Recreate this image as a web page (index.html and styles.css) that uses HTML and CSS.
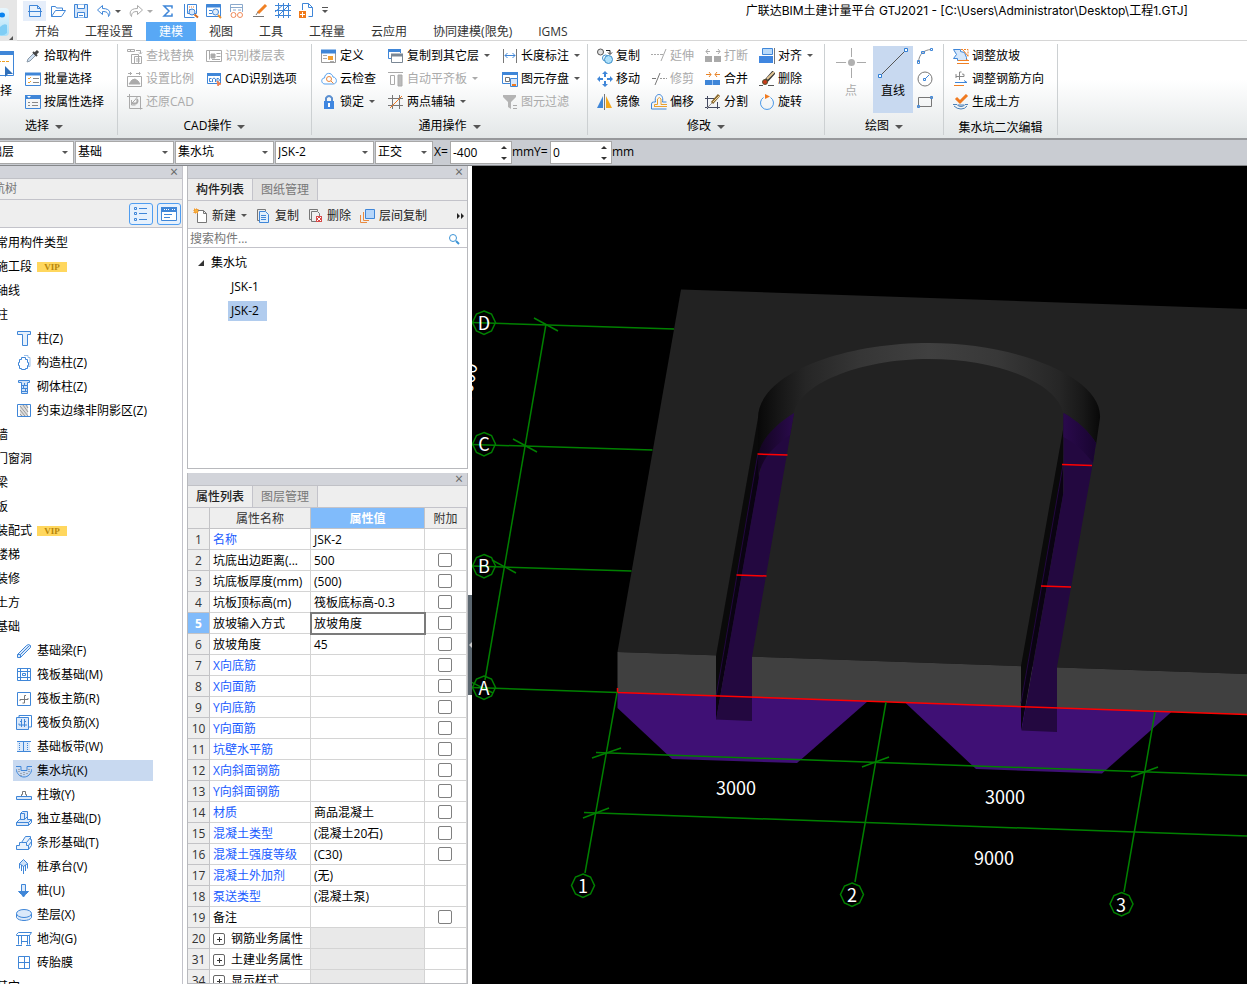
FILE: index.html
```html
<!DOCTYPE html>
<html lang="zh-CN">

<head>
  <meta charset="UTF-8">
  <meta name="viewport" content="width=device-width, initial-scale=1.0">
  <title>广联达BIM土建计量平台 GTJ2021</title>
  <link rel="stylesheet" href="styles.css">
</head>

<body>
  <header class="app-header">
    <div class="logo">
      <svg width="17" height="43" viewBox="0 0 17 43">
        <defs>
          <linearGradient id="logoBg" x1="0" y1="0" x2="0" y2="1">
            <stop offset="0" stop-color="#e8f6fd" />
            <stop offset="1" stop-color="#a9dff8" />
          </linearGradient>
        </defs>
        <rect x="-10" y="8" width="19" height="28" rx="4" fill="url(#logoBg)" />
        <ellipse cx="2" cy="15" rx="3" ry="2.5" fill="#0a84f0" />
        <path d="M0 27q4-4 7-2v8q-3 3-7 2z" fill="#7fcdf5" />
        <path d="M13 36v4h-4z" fill="#555" />
      </svg>
    </div>
    <div class="header-main">
      <div class="titlebar">
        <div class="quick">
          <button class="quick-btn current" aria-label="新建"><svg class="icon" viewBox="0 0 16 16"><path d="M2.500 2.500h8l3 3v8h-11zM10.500 2.500v3h3M1 8.500h14" fill="#e8f2fd" /></svg></button>
          <button class="quick-btn" aria-label="打开"><svg class="icon" viewBox="0 0 16 16"><path d="M1.500 13.500v-10h4l1 1.500h6v2.500M1.500 13.500l4-6h10l-4 6z" /></svg></button>
          <button class="quick-btn" aria-label="保存"><svg class="icon" viewBox="0 0 16 16"><path d="M1.500 1.500h13v13h-13z" fill="#d5e6fa" /><path d="M4.500 1.500v4h7v-4M4.500 14.500v-5h7v5M6 12.500h4" fill="#fff" /></svg></button>
          <button class="quick-btn split" aria-label="撤销"><svg class="icon" viewBox="0 0 16 16"><path d="M6.500 2.500l-5 4.500 5 4.500v-3c4 0 6 1 6 5 2-2 3-8-6-8z" /></svg><span class="caret"></span></button>
          <button class="quick-btn split" aria-label="恢复"><svg class="icon off" viewBox="0 0 16 16"><path d="M9.500 2.500l5 4.500-5 4.500v-3c-4 0-6 1-6 5-2-2-3-8 6-8z" /></svg><span class="caret off"></span></button>
          <button class="quick-btn" aria-label="汇总计算"><svg class="icon" viewBox="0 0 16 16"><path d="M12 5.500v-2.500H4l5 5-5 5h8v-2.500" stroke-width="1.500" /></svg></button>
          <button class="quick-btn" aria-label="查看工程量"><svg class="icon" viewBox="0 0 16 16"><path d="M1.500 1v13.500h10M4.500 1.500h9v9h-9z" /><path d="M6 4h6M6 6.500h4" stroke="#f08038" stroke-dasharray="1 1" /><circle cx="9" cy="9" r="3" fill="#d8e8fa" /><path d="M11.500 11.500l3.500 3" stroke="#d2691e" stroke-width="2" /></svg></button>
          <button class="quick-btn" aria-label="查看报表"><svg class="icon" viewBox="0 0 16 16"><path d="M.500 1.500h14v12h-14z" /><path d="M0 3h15" stroke-width="3" /><path d="M3 7.500h3M3 10.500h3" /><circle cx="9.500" cy="9" r="3" fill="#e2eefb" /><path d="M12 12l3 3" stroke="#e89030" stroke-width="2" /></svg></button>
          <button class="quick-btn" aria-label="合法性检查"><svg class="icon" viewBox="0 0 16 16"><path d="M1.500 9v-7.500h12v7.500M1.500 4.500h12M4 7h3M9 7h3" stroke="#8aa9cc" /><circle cx="4.500" cy="12" r="2.500" stroke="#f08a5a" /><circle cx="11" cy="12" r="2.500" stroke="#f08a5a" /></svg></button>
          <button class="quick-btn" aria-label="标注"><svg class="icon" viewBox="0 0 16 16"><path d="M14 2l-8 8" stroke="#f08024" stroke-width="3" /><path d="M6 9l-2 3M1 13.500h11" stroke="#777" /></svg></button>
          <button class="quick-btn" aria-label="轴网"><svg class="icon" viewBox="0 0 16 16"><path d="M3.500 0v15M8.500 0v15M13.500 0v15M0 2.500h16M0 7.500h16M0 12.500h16M3.500 12.500l10-10M0 9l9-8" /></svg></button>
          <button class="quick-btn" aria-label="导出"><svg class="icon" viewBox="0 0 16 16"><path d="M4.500 7v-6.500h6l4 4v9h-4M10.500 .500v4h4" /><path d="M1 8h7v7H1z" fill="#f07a1a" stroke="none" /><path d="M2 11.500h5M4.500 9v5" stroke="#fff" /></svg></button>
          <button class="quick-btn more" aria-label="更多"><span class="caret"></span></button>
        </div>
        <h1 class="window-title">广联达BIM土建计量平台 GTJ2021 - [C:\Users\Administrator\Desktop\工程1.GTJ]</h1>
      </div>
      <nav class="menu-tabs">
        <button class="menu-tab">开始</button>
        <button class="menu-tab">工程设置</button>
        <button class="menu-tab active">建模</button>
        <button class="menu-tab">视图</button>
        <button class="menu-tab">工具</button>
        <button class="menu-tab">工程量</button>
        <button class="menu-tab">云应用</button>
        <button class="menu-tab">协同建模(限免)</button>
        <button class="menu-tab">IGMS</button>
      </nav>
    </div>
  </header>

  <div class="ribbon">
    <section class="group group-select">
      <div class="group-body">
        <button class="big-tool select-tool">
          <svg class="icon-lg" viewBox="0 0 30 30"><path d="M1.500 3.500h27v24h-27z" /><path d="M1 5h28" stroke-width="4" /><path d="M5 13.500h20" stroke="#f0a020" stroke-dasharray="3 1" /><path d="M20 18l8 8h-5l-3 3z" fill="#2f6fba" stroke="none" /></svg>
          <span>选择</span>
        </button>
        <div class="col">
          <button class="tool"><svg class="icon" viewBox="0 0 16 16"><path d="M2 14l1-3 6-6 2 2-6 6z" fill="#cfe0f2" stroke="#8a99a8" /><path d="M8 4l4 4" stroke="#444" stroke-width="2" /><path d="M10 6l3-3" stroke="#444" stroke-width="3" /></svg>拾取构件</button>
          <button class="tool"><svg class="icon" viewBox="0 0 16 16"><path d="M.500 2.500h15v12H.500z" /><path d="M0 3h16" stroke-width="3" /><path d="M3 7l1 1 2-2M3 11l1 1 2-2" stroke="#f0a030" /><path d="M8 7.500h6M8 11.500h6" stroke="#888" /></svg>批量选择</button>
          <button class="tool"><svg class="icon" viewBox="0 0 16 16"><path d="M.500 2.500h15v12H.500z" /><path d="M0 3h16" stroke-width="4" /><path d="M2 2h4L4 4z" fill="#fff" stroke="none" /><path d="M3 8.500h2M3 11.500h2M7 8.500h6M7 11.500h6" stroke="#888" /></svg>按属性选择</button>
        </div>
      </div>
      <button class="group-label">选择<span class="caret"></span></button>
    </section>

    <section class="group group-cad">
      <div class="group-body">
        <div class="col">
          <button class="tool" disabled><svg class="icon off" viewBox="0 0 16 16"><path d="M.500 1.500h7v2h-7zM3.500 1v3M9 2.500h4.500v3M12 4.500l1.500 1.500 1.500-1.500M4.500 6.500h7v9h-7zM7.500 8.500h7v7h-7zM9 11h4M9 13h4" /></svg>查找替换</button>
          <button class="tool" disabled><svg class="icon off" viewBox="0 0 16 16"><path d="M.500 5.500h14v10H.500zM1 2.500h4M3.500 1v3M9 2.500h4.500M12.500 1v3" /><path d="M2 13l3-4 3-1 3 2 2 3z" fill="#aaa" /></svg>设置比例</button>
          <button class="tool" disabled><svg class="icon off" viewBox="0 0 16 16"><path d="M2.500 0v14.500h13M0 2.500h13.500v13M5 9l3-3 3-4M4.500 6v5h4" /><path d="M5 9c6 2 6-2 5-4" stroke-width="2" /></svg>还原CAD</button>
        </div>
        <div class="col">
          <button class="tool" disabled><svg class="icon off" viewBox="0 0 16 16"><path d="M3.500 13.500H.500v-11h15v11zM3.500 2.500v9" /><path d="M5 6h4v4H5z" fill="#aaa" /><path d="M10.500 5.500h4M10.500 8.500h4M6 11.500h8" /></svg>识别楼层表</button>
          <button class="tool"><svg class="icon" viewBox="0 0 16 16"><path d="M1.500 2.500h13v10h-13z" /><path d="M1 3.500h14" stroke-width="3" /><path d="M5.500 7.500h-2v3h2M6.500 11V8l1.500-1 1.500 1v3M11 7.500h1.500l1 1.500-1 1.500H11z" /><path d="M11 10l4 3-2 .500-1 1.500z" fill="#f08050" stroke="#f08050" /></svg>CAD识别选项</button>
        </div>
      </div>
      <button class="group-label">CAD操作<span class="caret"></span></button>
    </section>

    <section class="group group-common">
      <div class="group-body">
        <div class="col">
          <button class="tool"><svg class="icon" viewBox="0 0 16 16"><path d="M.500 2.500h14v12H.500z" stroke="#999" /><path d="M0 3.500h15" stroke-width="4" /><path d="M7 8h5v4H7z" fill="#f5a030" stroke="none" /><path d="M2 7.500h4M2 10.500h4M9 13.500h4" stroke="#aaa" /></svg>定义</button>
          <button class="tool"><svg class="icon" viewBox="0 0 16 16"><path d="M4 13C0 13-.500 7 3.500 7 4 1 11 1 12 6c4 0 5 7 0 7z" stroke="#55a0ee" /><circle cx="8" cy="8" r="2.500" stroke="#e8853a" /><path d="M10 10l2.500 2.500" stroke="#e8853a" /></svg>云检查</button>
          <button class="tool"><svg class="icon" viewBox="0 0 16 16"><path d="M5 7V4q3-4 6 0v3" stroke="#5a8fd0" stroke-width="2" /><path d="M3 7h10v8H3z" fill="#3f86e0" stroke="none" /><path d="M8 9v4" stroke="#fff" stroke-width="2" /></svg>锁定<span class="caret"></span></button>
        </div>
        <div class="col">
          <button class="tool"><svg class="icon" viewBox="0 0 16 16"><path d="M3 10.500H.500v-9h12V5" /><path d="M0 2.500h13" stroke-width="3" /><path d="M3.500 6.500h11v8h-11z" fill="#fff" stroke="#7a8794" /><path d="M3 7h12" stroke="#7a8794" stroke-width="3" /></svg>复制到其它层<span class="caret"></span></button>
          <button class="tool" disabled><svg class="icon off" viewBox="0 0 16 16"><path d="M0 1.500h15M2.500 4.500h4v9h-4z" /><path d="M10 4h4v11h-4z" fill="#bbb" /></svg>自动平齐板<span class="caret off"></span></button>
          <button class="tool"><svg class="icon" viewBox="0 0 16 16"><path d="M4.500 1v14M11.500 1v14M0 4.500h15M0 11.500h15" stroke="#777" /><path d="M2 14L14 2" stroke="#f07a20" /></svg>两点辅轴<span class="caret"></span></button>
        </div>
        <div class="col">
          <button class="tool"><svg class="icon" viewBox="0 0 16 16"><path d="M1.500 1v14M14.500 1v14" stroke="#777" /><path d="M3 7.500h10M5.500 5L3 7.500 5.500 10M10.500 5L13 7.500 10.500 10" /></svg>长度标注<span class="caret"></span></button>
          <button class="tool"><svg class="icon" viewBox="0 0 16 16"><path d="M.500 1.500h15v11H.500z" /><path d="M0 2.500h16" stroke-width="3" /><path d="M3.500 6.500h4v4h-4z" stroke="#777" /><path d="M8.500 7.500h7v8h-7z" fill="#d9e8fa" /><path d="M10 13h4v2h-4z" fill="#f07a20" stroke="none" /></svg>图元存盘<span class="caret"></span></button>
          <button class="tool" disabled><svg class="icon off" viewBox="0 0 16 16"><path d="M1 1h13v2L9 8v7l-3-2V8L1 3z" fill="#b4b4b4" stroke="none" /><path d="M11 11.500h4M11 14.500h4" /></svg>图元过滤</button>
        </div>
      </div>
      <button class="group-label">通用操作<span class="caret"></span></button>
    </section>

    <section class="group group-modify">
      <div class="group-body">
        <div class="col">
          <button class="tool"><svg class="icon" viewBox="0 0 16 16"><circle cx="3.500" cy="4" r="3" fill="#e0e0e0" stroke="#555" /><path d="M9 2.500h4v3M11 4.500l2 2 2-2" stroke="#222" /><circle cx="8.500" cy="10" r="3" stroke="#3b8dc8" /><circle cx="11.500" cy="11.500" r="4" fill="#aee0fa" stroke="#3b8dc8" /></svg>复制</button>
          <button class="tool"><svg class="icon" viewBox="0 0 16 16"><path d="M8 6V2M8 10v4M6 8H2M10 8h4" stroke="#3f86d8" stroke-width="2" /><path d="M8 0l3 3H5zM8 16l3-3H5zM0 8l3-3v6zM16 8l-3-3v6z" fill="#3f86d8" stroke="none" /></svg>移动</button>
          <button class="tool"><svg class="icon" viewBox="0 0 16 16"><path d="M6 2v12H0z" fill="#3f86d8" stroke="none" /><path d="M9 2v12h6z" fill="#f5a81c" stroke="none" /><path d="M7.500 0v16" stroke="#777" /></svg>镜像</button>
        </div>
        <div class="col">
          <button class="tool" disabled><svg class="icon off" viewBox="0 0 16 16"><path d="M0 6.500h8" stroke-dasharray="2 1" /><path d="M9 6.500h3M15 1l-5 12" /></svg>延伸</button>
          <button class="tool" disabled><svg class="icon" viewBox="0 0 16 16"><path d="M1 7.500h4M9 2L4 14" stroke="#777" /><path d="M9 7.500h7" stroke="#999" stroke-dasharray="2 1" /></svg>修剪</button>
          <button class="tool"><svg class="icon" viewBox="0 0 16 16"><path d="M3.500 12.500v-2h3V5q2-3 3.500 0v5.500h6M3 12.500h13" stroke="#e8a030" /><path d="M15.500 15H.500v-5q0-2 2-2h2c-2-10 9-10 7 0h4" /></svg>偏移</button>
        </div>
        <div class="col">
          <button class="tool" disabled><svg class="icon off" viewBox="0 0 16 16"><path d="M0 8h7v6H0zM9 8h7v6H9z" fill="#aaa" stroke="none" /><path d="M1 3.500h4M3 1L1 3.500 3 6M11 3.500h4M13 1l2 2.500L13 6" /></svg>打断</button>
          <button class="tool"><svg class="icon" viewBox="0 0 16 16"><path d="M0 9h15v5H0z" fill="#3f86d8" stroke="none" /><path d="M7.500 9v5" stroke="#9cc5f5" /><path d="M1 3.500h5M4 1l2 2.500L4 6M10 3.500h5M12 1l-2 2.500L12 6" stroke="#e8852a" /></svg>合并</button>
          <button class="tool"><svg class="icon" viewBox="0 0 16 16"><path d="M0 4.500h10M0 13.500h15M2.500 2v13M12.500 8v7" stroke="#444a60" /><path d="M2 14L11 5" stroke="#999" /><path d="M14 1L7 9" stroke="#8a6a30" stroke-width="3" /><path d="M14 2L8 8" stroke="#f0d8a0" /></svg>分割</button>
        </div>
        <div class="col">
          <button class="tool"><svg class="icon" viewBox="0 0 16 16"><path d="M3.500 .500h10v6h-10z" fill="#b9dafa" /><path d="M0 8h14v7H0z" fill="#3f86e0" stroke="none" /><path d="M15.500 0v16" stroke="#777" /></svg>对齐<span class="caret"></span></button>
          <button class="tool"><svg class="icon" viewBox="0 0 16 16"><path d="M15 1L7 10" stroke="#333" stroke-width="4" /><path d="M15 1L8 8" stroke="#e5c795" stroke-width="2" /><circle cx="6" cy="11" r="2.500" fill="#c83a1a" stroke="#553" /><path d="M0 14.500h4M9 14.500h6" stroke="#555" /></svg>删除</button>
          <button class="tool"><svg class="icon" viewBox="0 0 16 16"><path d="M4.500 3.500a6.500 6.500 0 1 0 7 0" stroke="#4a98e8" /><path d="M6 0l5 2.500L6 5z" fill="#f07a20" stroke="none" /></svg>旋转</button>
        </div>
      </div>
      <button class="group-label">修改<span class="caret"></span></button>
    </section>

    <section class="group group-draw">
      <div class="group-body">
        <button class="big-tool" disabled>
          <svg class="icon-lg off" viewBox="0 0 30 30"><path d="M15.500 0v30M0 14.500h30" /><circle cx="15.500" cy="14.500" r="4.500" fill="#b0b0b0" stroke="#fff" stroke-width="2" /></svg>
          <span>点</span>
        </button>
        <button class="big-tool active">
          <svg class="icon-lg" viewBox="0 0 30 30"><path d="M3 27L27 3" stroke="#555" /><path d="M.500 26.500h3v3h-3zM26.500 .500h3v3h-3z" fill="#fff" stroke="#2f7fd6" /></svg>
          <span>直线</span>
        </button>
        <div class="col">
          <button class="tool" aria-label="弧"><svg class="icon" viewBox="0 0 16 16"><path d="M1.500 14C2 6 7 2 14 1.500" stroke="#888" /><path d="M.500 12.500h2v3h-2zM4.500 3.500h3v2h-3zM13.500 .500h2v2h-2z" /></svg></button>
          <button class="tool" aria-label="圆"><svg class="icon" viewBox="0 0 16 16"><circle cx="8" cy="8" r="7" stroke="#777" /><path d="M8 8l4-4M6.500 7.500h2v2h-2z" /></svg></button>
          <button class="tool" aria-label="矩形"><svg class="icon" viewBox="0 0 16 16"><path d="M1.500 3.500h13v9h-13z" stroke="#777" /><path d="M.500 11.500h2v2h-2zM13.500 2.500h2v2h-2z" /></svg></button>
        </div>
      </div>
      <button class="group-label">绘图<span class="caret"></span></button>
    </section>

    <section class="group group-edit">
      <div class="group-body">
        <div class="col">
          <button class="tool"><svg class="icon" viewBox="0 0 16 16"><path d="M.500 1.500h7v2l4 1 2 5v3h-9v-2h-4l3-4z" fill="#d5e7fb" /><path d="M8 1.500h7v7" stroke="#f08024" stroke-dasharray="2 1" /><path d="M10 2l5 6M5 12.500h11M4 15.500h12M13 11l2 1.500" stroke="#f08024" /></svg>调整放坡</button>
          <button class="tool"><svg class="icon" viewBox="0 0 16 16"><path d="M6.500 1v8M3 5.500h8q1-3-2-2.500M3 3v4M6.500 1h2" stroke="#888" /><path d="M2 11.500h12M11 9.500l3 2" /><path d="M1 14.500h10" stroke="#f08024" /></svg>调整钢筋方向</button>
          <button class="tool"><svg class="icon" viewBox="0 0 16 16"><path d="M3 4l4 4 7-7" stroke="#f07a20" stroke-width="3" /><path d="M0 10.500h4q1 2 4 2t4-2h3M1 12q3 3 7 3t6-3M5 11h6" stroke="#4a80b8" /></svg>生成土方</button>
        </div>
      </div>
      <button class="group-label">集水坑二次编辑</button>
    </section>
  </div>

  <div class="options-bar">
    <div class="combo combo-floor"><select aria-label="楼层"><option>基础层</option></select></div>
    <div class="combo"><select aria-label="构件大类"><option>基础</option></select></div>
    <div class="combo"><select aria-label="构件类型"><option>集水坑</option></select></div>
    <div class="combo"><select aria-label="构件"><option>JSK-2</option></select></div>
    <div class="combo combo-small"><select aria-label="偏移方式"><option>正交</option></select></div>
    <label for="offsetX">X=</label>
    <div class="spin"><input type="number" id="offsetX" value="-400"></div>
    <span class="unit">mm</span>
    <label for="offsetY">Y=</label>
    <div class="spin"><input type="number" id="offsetY" value="0"></div>
    <span class="unit">mm</span>
  </div>

  <main class="workspace">
    <aside class="nav-panel">
      <div class="dock-bar"><button class="close" aria-label="关闭">×</button></div>
      <h2 class="nav-title">导航树</h2>
      <div class="nav-tools">
        <button class="view-btn" aria-label="列表"><svg class="icon" viewBox="0 0 16 16"><path d="M1.500 1.500h2v2h-2zM1.500 6.500h2v2h-2zM1.500 12.500h2v2h-2zM6 2.500h8M6 7.500h8M6 13.500h8" /></svg></button>
        <button class="view-btn" aria-label="卡片"><svg class="icon" viewBox="0 0 16 16"><path d="M.500 1.500h15v13H.500z" fill="#fff" /><path d="M0 3.500h16" stroke-width="5" /><path d="M3 3.500h6M11 3.500h3" stroke="#fff" stroke-dasharray="1 1" /><path d="M3 8.500h8M3 11.500h6" /></svg></button>
      </div>
      <ul class="nav-tree">
        <li>常用构件类型</li>
        <li>施工段<span class="vip">VIP</span></li>
        <li>轴线</li>
        <li>柱</li>
        <li class="sub"><svg class="icon" viewBox="0 0 16 16"><path d="M1.500 .500h13v3h-3v11h-5v-11h-5z" fill="#e5f0fc" /></svg>柱(Z)</li>
        <li class="sub"><svg class="icon" viewBox="0 0 16 16"><path d="M8 .500h4v2h2v9h-2" stroke="#9bbfe8" /><path d="M5.500 2.500h4v2h2v3h1v3h-1v3h-2v1h-4v-1h-2v-3h-1v-3h1v-3h2z" fill="#fff" /></svg>构造柱(Z)</li>
        <li class="sub"><svg class="icon" viewBox="0 0 16 16"><path d="M2.500 1.500h11v2h-2v11h-6v-11h-3z" fill="#cfe2f8" /><path d="M6 6.500h5M6 9.500h5M6 12.500h5M8.500 4v2M7.500 7v2M9.500 10v2" /></svg>砌体柱(Z)</li>
        <li class="sub"><svg class="icon" viewBox="0 0 16 16"><path d="M1.500 1.500h13v12h-13z" /><path d="M4 2h8v11H4z" fill="#ddd" stroke="none" /><path d="M4 3l8 10M4 7l5 6M7 2l5 7M4 11l2 2M10 2l2 3" stroke="#999" /></svg>约束边缘非阴影区(Z)</li>
        <li>墙</li>
        <li>门窗洞</li>
        <li>梁</li>
        <li>板</li>
        <li>装配式<span class="vip">VIP</span></li>
        <li>楼梯</li>
        <li>装修</li>
        <li>土方</li>
        <li>基础</li>
        <li class="sub"><svg class="icon" viewBox="0 0 16 16"><path d="M1.500 11.500l9-9 2-1 2 1v2l-10 10h-3zM1.500 11.500h3v3M4.500 11.500l9-9" fill="#dbe9fa" /></svg>基础梁(F)</li>
        <li class="sub"><svg class="icon" viewBox="0 0 16 16"><path d="M1.500 1.500h13v12h-13zM4.500 1v13M11.500 1v13M1 4.500h14M1 10.500h14M6.500 6.500h3v2h-3z" /></svg>筏板基础(M)</li>
        <li class="sub"><svg class="icon" viewBox="0 0 16 16"><path d="M1.500 1.500h13v13h-13z" /><path d="M4 10V8.500h8V7M8.500 12V4.500H10M6.500 12h2" stroke="#777" /></svg>筏板主筋(R)</li>
        <li class="sub"><svg class="icon" viewBox="0 0 16 16"><path d="M3 3V.500h12.500V12H13" /><path d="M.500 2.500h12v12H.500z" fill="#dbe9fa" /><path d="M5.500 4v8M8.500 4v8M3 8.500V10h8M4 6.500h2M8 6.500h2" /></svg>筏板负筋(X)</li>
        <li class="sub"><svg class="icon" viewBox="0 0 16 16"><path d="M1 2h13v11H1z" fill="#dbe9fa" stroke="none" /><path d="M1 2.500h14M1 12.500h14M7.500 2v11" /><path d="M3.500 4v8M11.500 4v8" stroke-dasharray="1 1" /></svg>基础板带(W)</li>
        <li class="sub selected"><svg class="icon" viewBox="0 0 16 16"><path d="M0 3.500h5v4h6v-4h5M0 6c1 5 4 8 8 8s7-3 8-8" /><path d="M3 6v4M5 10v3M8 9v4M11 10v2M13 6v4" stroke="#777" stroke-dasharray="1 1" /></svg>集水坑(K)</li>
        <li class="sub"><svg class="icon" viewBox="0 0 16 16"><path d="M.500 9.500h15v3H.500z" fill="#dbe9fa" /><path d="M5.500 9V7.500h1v-3h3v3h1V9" stroke="#777" /></svg>柱墩(Y)</li>
        <li class="sub"><svg class="icon" viewBox="0 0 16 16"><path d="M.500 11.500l3-3h1v-6l2-2h5v8h4v3l-3 3h-12zM4.500 2.500h4v6h-4M8.500 8.500l3-3M.500 11.500h12v3M12.500 11.500l3-3" fill="#dbe9fa" /></svg>独立基础(D)</li>
        <li class="sub"><svg class="icon" viewBox="0 0 16 16"><path d="M.500 14.500v-4h3v-3h2l4-6h5v3h1v6l-3 4z" fill="#e8f1fc" /><path d="M5.500 7.500l5 0v3h2v4M10.500 7.500l4-5M12.500 10.500l3-4" /></svg>条形基础(T)</li>
        <li class="sub"><svg class="icon" viewBox="0 0 16 16"><path d="M7.500 .500l4 4-4 3-4-3z" fill="#cfe2f8" /><path d="M3.500 4.500v5M11.500 4.500v5M5.500 6v6M7.500 7v8M9.500 6v6" /></svg>桩承台(V)</li>
        <li class="sub"><svg class="icon" viewBox="0 0 16 16"><path d="M5.500 1.500h4v7h-4z" fill="#dbe9fa" /><path d="M2.500 8.500h10l-3 3h-4z" fill="#3f86d8" /><path d="M6 12h3l-1.500 2z" fill="#3f86d8" /></svg>桩(U)</li>
        <li class="sub"><svg class="icon" viewBox="0 0 16 16"><path d="M.500 6.500v4c2 4 13 4 15 0v-4" fill="#dbe9fa" /><ellipse cx="8" cy="6.500" rx="7.500" ry="4" fill="#dbe9fa" /></svg>垫层(X)</li>
        <li class="sub"><svg class="icon" viewBox="0 0 16 16"><path d="M.500 3.500l2-2h13l-2 3H.500zM2.500 4.500v9M5.500 4.500v9M11.500 4.500v9M13.500 4.500v9M0 14.500h6M10 14.500h5M5.500 10.500h6" /></svg>地沟(G)</li>
        <li class="sub"><svg class="icon" viewBox="0 0 16 16"><path d="M2.500 1.500h11v12h-11zM8.500 2v11M3 7.500h10" /></svg>砖胎膜</li>
        <li>其它</li>
      </ul>
    </aside>

    <div class="dock">
      <section class="panel component-panel">
        <div class="dock-bar"><button class="close" aria-label="关闭">×</button></div>
        <div class="panel-tabs">
          <button class="panel-tab active">构件列表</button>
          <button class="panel-tab">图纸管理</button>
        </div>
        <div class="panel-tools">
          <button class="tool"><svg class="icon" viewBox="0 0 16 16"><path d="M4.500 2.500h6l3 3v9h-9zM10.500 2.500v3h3" fill="#fff" stroke="#777" /><path d="M1 1h4v4H1z" fill="#f5b040" stroke="#f08a20" stroke-dasharray="1 1" /></svg>新建<span class="caret"></span></button>
          <button class="tool"><svg class="icon" viewBox="0 0 16 16"><path d="M3 12.500H1.500v-11h8V3" stroke="#777" /><path d="M3.500 3.500h6l3 3v8h-9z" fill="#e0eefc" /><path d="M5 7.500h5M5 9.500h5M5 11.500h5" /></svg>复制</button>
          <button class="tool"><svg class="icon" viewBox="0 0 16 16"><path d="M3 11.500H1.500v-10h8V3M8 13.500H3.500v-10h6l2 2V8" stroke="#777" /><path d="M8 8h6v6H8z" fill="#d84a4a" stroke="none" /><path d="M9 9l4 4M13 9l-4 4" stroke="#fff" /></svg>删除</button>
          <button class="tool"><svg class="icon" viewBox="0 0 16 16"><path d="M3.500 4v8.500H9M.500 7v7.500H7" stroke="#e88a40" /><path d="M5.500 1.500h9v9h-9z" fill="#b5d6fb" /></svg>层间复制</button>
          <button class="overflow-btn" aria-label="更多">
            <svg width="8" height="8" viewBox="0 0 8 8"><path d="M0 1l3 3-3 3zM4 1l3 3-3 3z" fill="#222" /></svg>
          </button>
        </div>
        <div class="search">
          <input type="text" placeholder="搜索构件..." aria-label="搜索构件">
          <svg width="12" height="12" viewBox="0 0 12 12"><circle cx="5" cy="5" r="3.500" fill="#fff" stroke="#3d94d6" /><path d="M8 8l3 3" stroke="#3d94d6" stroke-width="2" /></svg>
        </div>
        <ul class="component-tree">
          <li class="root"><span class="twist"></span>集水坑</li>
          <li><span class="item">JSK-1</span></li>
          <li><span class="item selected">JSK-2</span></li>
        </ul>
      </section>

      <section class="panel property-panel">
        <div class="dock-bar"><button class="close" aria-label="关闭">×</button></div>
        <div class="panel-tabs">
          <button class="panel-tab active">属性列表</button>
          <button class="panel-tab">图层管理</button>
        </div>
        <table class="props">
          <colgroup>
            <col class="c-num">
            <col class="c-name">
            <col class="c-value">
            <col class="c-add">
          </colgroup>
          <thead>
            <tr><th></th><th>属性名称</th><th class="hot">属性值</th><th>附加</th></tr>
          </thead>
          <tbody>
            <tr><th>1</th><td class="blue">名称</td><td>JSK-2</td><td></td></tr>
            <tr><th>2</th><td>坑底出边距离(...</td><td>500</td><td><input type="checkbox" aria-label="附加 坑底出边距离"></td></tr>
            <tr><th>3</th><td>坑底板厚度(mm)</td><td>(500)</td><td><input type="checkbox" aria-label="附加 坑底板厚度"></td></tr>
            <tr><th>4</th><td>坑板顶标高(m)</td><td>筏板底标高-0.3</td><td><input type="checkbox" aria-label="附加 坑板顶标高"></td></tr>
            <tr><th class="hot">5</th><td>放坡输入方式</td><td class="editing">放坡角度</td><td><input type="checkbox" aria-label="附加 放坡输入方式"></td></tr>
            <tr><th>6</th><td>放坡角度</td><td>45</td><td><input type="checkbox" aria-label="附加 放坡角度"></td></tr>
            <tr><th>7</th><td class="blue">X向底筋</td><td></td><td><input type="checkbox" aria-label="附加 X向底筋"></td></tr>
            <tr><th>8</th><td class="blue">X向面筋</td><td></td><td><input type="checkbox" aria-label="附加 X向面筋"></td></tr>
            <tr><th>9</th><td class="blue">Y向底筋</td><td></td><td><input type="checkbox" aria-label="附加 Y向底筋"></td></tr>
            <tr><th>10</th><td class="blue">Y向面筋</td><td></td><td><input type="checkbox" aria-label="附加 Y向面筋"></td></tr>
            <tr><th>11</th><td class="blue">坑壁水平筋</td><td></td><td><input type="checkbox" aria-label="附加 坑壁水平筋"></td></tr>
            <tr><th>12</th><td class="blue">X向斜面钢筋</td><td></td><td><input type="checkbox" aria-label="附加 X向斜面钢筋"></td></tr>
            <tr><th>13</th><td class="blue">Y向斜面钢筋</td><td></td><td><input type="checkbox" aria-label="附加 Y向斜面钢筋"></td></tr>
            <tr><th>14</th><td class="blue">材质</td><td>商品混凝土</td><td><input type="checkbox" aria-label="附加 材质"></td></tr>
            <tr><th>15</th><td class="blue">混凝土类型</td><td>(混凝土20石)</td><td><input type="checkbox" aria-label="附加 混凝土类型"></td></tr>
            <tr><th>16</th><td class="blue">混凝土强度等级</td><td>(C30)</td><td><input type="checkbox" aria-label="附加 混凝土强度等级"></td></tr>
            <tr><th>17</th><td class="blue">混凝土外加剂</td><td>(无)</td><td></td></tr>
            <tr><th>18</th><td class="blue">泵送类型</td><td>(混凝土泵)</td><td></td></tr>
            <tr><th>19</th><td>备注</td><td></td><td><input type="checkbox" aria-label="附加 备注"></td></tr>
            <tr class="fold"><th>20</th><td><button class="expand" aria-label="展开"></button>钢筋业务属性</td><td></td><td></td></tr>
            <tr class="fold"><th>31</th><td><button class="expand" aria-label="展开"></button>土建业务属性</td><td></td><td></td></tr>
            <tr class="fold"><th>34</th><td><button class="expand" aria-label="展开"></button>显示样式</td><td></td><td></td></tr>
          </tbody>
        </table>
      </section>
    </div>

    <div class="splitter"><button class="splitter-grip" aria-label="收起"></button></div>

    <div class="viewport">
      <svg class="scene" viewBox="472 166 775 818" preserveAspectRatio="xMinYMin slice">
        <defs>
          <linearGradient id="arch" gradientUnits="userSpaceOnUse" x1="758" y1="0" x2="1100" y2="0">
            <stop offset="0" stop-color="#080808" />
            <stop offset=".06" stop-color="#161616" />
            <stop offset=".14" stop-color="#262626" />
            <stop offset=".3" stop-color="#363636" />
            <stop offset=".5" stop-color="#404040" />
            <stop offset=".7" stop-color="#383838" />
            <stop offset=".88" stop-color="#262626" />
            <stop offset=".95" stop-color="#181818" />
            <stop offset="1" stop-color="#080808" />
          </linearGradient>
          <linearGradient id="curveL">
            <stop offset="0" stop-color="#12041f" />
            <stop offset="1" stop-color="#2a0a4c" />
          </linearGradient>
          <linearGradient id="curveR">
            <stop offset="0" stop-color="#2a0a4c" />
            <stop offset="1" stop-color="#180430" />
          </linearGradient>
        </defs>

        <!-- slab -->
        <path d="M681 289.500L1247 309v365L617.500 652z" fill="#222" />
        <path d="M617.500 652L1247 674v40.500L617.500 692.500z" fill="#404040" />

        <!-- pits under the slab -->
        <path d="M617.500 692.500V708L672 759l125 4 71-62z" fill="#3f1075" />
        <path d="M905 702.500L976 769l126 4.500 70-62z" fill="#3f1075" />

        <!-- arch wall -->
        <path d="M758 420C756 375 840 343 929 343S1103 378 1100 418L1096 445 1063.500 414C1058 384 1000 359 929 359S798 385 794 414L758 457z" fill="url(#arch)" />

        <!-- left groove -->
        <path d="M758 418L716 656v64l42-240z" fill="#0a0a0a" />
        <path d="M757.700 455L716 697v22l43-240z" fill="#0a0312" />
        <path d="M757.700 455L716 697" stroke="#230840" />
        <path d="M794 413L752 657v64l-36-1.500L759 477c4-24 14-42 35-64z" fill="#230840" />
        <path d="M794 413C776 424 760 440 758 456v22c4-20 14-30 32-43z" fill="url(#curveL)" />

        <!-- right groove -->
        <path d="M1063.500 413L1063 430 1021 666v64l42-236z" fill="#0a0a0a" />
        <path d="M1063 465L1021 703v27l42-236z" fill="#0a0312" />
        <path d="M1063 465L1021 703" stroke="#230840" />
        <path d="M1063.500 413c14 8 25 18 32.500 30l-3 19-36 205v65l-35.500-1.500L1063.500 492z" fill="#230840" />
        <path d="M1063.500 413c14 8 25 18 32.500 30l-3 20c-8-11-18-20-29.500-26z" fill="url(#curveR)" />

        <g stroke="#f00" stroke-width="1.500">
          <path d="M617.500 692.500L1247 714.500M617.500 688v5" />
          <path d="M757.500 454l30 1M736.500 575l30 1M1062 464.500l30 1M1041 586l30 1" />
        </g>

        <g class="axis">
          <path d="M472 322.500L674 329M472 444.500L652.500 450M472 566L631.500 571M472 687.500L617.500 692.500" />
          <path d="M546 324L485 680" />
          <path d="M534 318l24 13M513 439l24 13M492 560l24 13M471 682l22 11" />
          <path d="M617 693L585 873M886 702L855 882M1155 712L1124 892" />
          <path d="M596 752.500L1247 775.500M584 812.500L1247 836" />
          <path d="M592 758l29-10M862 767l27-10M1131 777l27-10M583 818l26-10" />
          <path id="bubble" d="M484 311l7.500 3 4 8.500-4 8.500-7.500 3.500-7.500-3.500-4-8.500 4-8.500z" />
          <use href="#bubble" y="121.500" />
          <use href="#bubble" y="243.500" />
          <use href="#bubble" y="365" />
          <use href="#bubble" x="99" y="563" />
          <use href="#bubble" x="368" y="572" />
          <use href="#bubble" x="637.500" y="581.500" />
        </g>

        <g class="marks">
          <text x="484" y="330">D</text>
          <text x="484" y="451">C</text>
          <text x="484" y="573">B</text>
          <text x="484" y="695">A</text>
          <text x="583" y="893">1</text>
          <text x="852" y="902">2</text>
          <text x="1121" y="912">3</text>
          <text x="736" y="795">3000</text>
          <text x="1005" y="804">3000</text>
          <text x="994" y="865">9000</text>
          <text transform="translate(474 384) rotate(-80)">3000</text>
        </g>
      </svg>
    </div>
  </main>
</body>

</html>
```
FILE: styles.css
```css
* {
  box-sizing: border-box;
}

body {
  margin: 0;
  height: 100vh;
  display: flex;
  flex-direction: column;
  overflow: hidden;
  background: #fff;
  color: #000;
  font-family: "Open Sans", "Noto Sans CJK SC", sans-serif;
  font-size: 12px;
  line-height: 20px;
}

button,
input,
select {
  font: inherit;
  color: inherit;
  padding: 0;
  border: none;
  background: none;
}

button {
  white-space: nowrap;
}

ul {
  list-style: none;
  margin: 0;
  padding: 0;
}

.icon {
  width: 16px;
  height: 16px;
  flex: none;
  fill: none;
  stroke: #3f86d8;
}

.icon-lg {
  width: 30px;
  height: 30px;
  flex: none;
  fill: none;
  stroke: #3f86d8;
}

.icon.off,
.icon-lg.off {
  stroke: #aaa;
}

.caret {
  display: inline-block;
  flex: none;
  border: 3px solid transparent;
  border-top: 3px solid #555;
  border-bottom: none;
}

.caret.off {
  border-top-color: #aaa;
}

/* Header */
.app-header {
  display: flex;
  flex: none;
  height: 41px;
  border-bottom: 1px solid #d6d6d6;
}

.logo {
  width: 17px;
  height: 43px;
  flex: none;
  background: #e6e6e6;
}

.logo svg {
  display: block;
}

.header-main {
  flex: 1;
  min-width: 0;
}

.titlebar {
  display: flex;
  height: 22px;
}

.quick {
  display: flex;
  align-items: center;
  padding-left: 6px;
}

.quick-btn {
  display: flex;
  align-items: center;
  justify-content: center;
  width: 23px;
  height: 20px;
}

.quick-btn.split {
  width: 32px;
  gap: 3px;
}

.quick-btn.current {
  background: #e6eefa;
}

.quick-btn.more {
  width: 15px;
}

.quick-btn.more .caret {
  position: relative;
}

.quick-btn.more .caret::before {
  content: '';
  position: absolute;
  left: -3px;
  top: -6px;
  width: 6px;
  height: 1px;
  background: #555;
}

.window-title {
  margin: 0 59px 0 auto;
  font-family: Inter, "Noto Sans CJK SC", sans-serif;
  font-size: 12px;
  font-weight: 400;
  line-height: 22px;
  white-space: nowrap;
}

.menu-tabs {
  display: flex;
  padding-left: 5px;
}

.menu-tab {
  height: 19px;
  padding: 0 13px;
  line-height: 19px;
  color: #333;
}

.menu-tab.active {
  background: #58a8f5;
  color: #fff;
}

/* Ribbon */
.ribbon {
  display: flex;
  flex: none;
  height: 99px;
  padding-top: 3px;
  background: linear-gradient(#fff 40%, #e3e7e8);
  border-bottom: 2px solid #96989b;
}

.group {
  display: flex;
  flex-direction: column;
  flex: none;
  height: 91px;
  border-right: 1px solid #ccd0d2;
}

.group-body {
  display: flex;
  gap: 12px;
  height: 69px;
  padding-left: 9px;
}

.group-label {
  height: 25px;
  line-height: 25px;
}

.group-label .caret {
  margin-left: 6px;
  vertical-align: middle;
  border-width: 4px 4px 0;
}

.group-select {
  width: 147px;
  margin-left: -29px;
}

.group-cad {
  width: 194px;
}

.group-common {
  width: 276px;
}

.group-modify {
  width: 237px;
}

.group-draw {
  width: 119px;
}

.group-edit {
  width: 114px;
}

.group-select .group-body {
  gap: 5px;
}

.group-modify .group-body {
  gap: 11px;
}

.group-draw .group-body {
  gap: 4px;
  padding-left: 8px;
}

.group-edit .group-label {
  padding-top: 2px;
}

.tool {
  display: flex;
  align-items: center;
  gap: 3px;
  height: 23px;
}

.tool .caret {
  margin-left: 2px;
}

.tool:disabled,
.big-tool:disabled {
  color: #aaa;
}

.big-tool {
  display: flex;
  flex-direction: column;
  align-items: center;
  gap: 3px;
  width: 36px;
  height: 67px;
  margin-top: 2px;
  padding-top: 2px;
}

.big-tool.active,
.select-tool {
  width: 40px;
}

.big-tool.active {
  background: #c8d9f0;
}

/* Options bar */
.options-bar {
  display: flex;
  align-items: center;
  flex: none;
  height: 26px;
  padding-bottom: 1px;
  background: #c9ccd2;
  border-bottom: 1px solid #85878a;
}

.combo {
  position: relative;
  width: 99px;
  height: 23px;
  margin-right: 1px;
  background: #fff;
  border: 1px solid #a8a8a8;
}

.combo select {
  appearance: none;
  width: 100%;
  height: 21px;
  padding-left: 2px;
}

.combo::after {
  content: '';
  position: absolute;
  right: 5px;
  top: 9px;
  border: 3px solid transparent;
  border-top-color: #555;
  border-bottom: none;
  pointer-events: none;
}

.combo-floor {
  margin-left: -25px;
}

.combo-small {
  width: 58px;
}

.options-bar label {
  width: 16px;
}

.unit {
  width: 22px;
}

.spin {
  position: relative;
  width: 62px;
  height: 23px;
  background: #fff;
  border: 1px solid #a8a8a8;
}

.spin input {
  appearance: textfield;
  width: 100%;
  height: 21px;
  padding-left: 2px;
}

.spin input::-webkit-inner-spin-button {
  appearance: none;
}

.spin::before,
.spin::after {
  content: '';
  position: absolute;
  right: 4px;
  border: 3px solid transparent;
  pointer-events: none;
}

.spin::before {
  top: 4px;
  border-top: none;
  border-bottom-color: #333;
}

.spin::after {
  bottom: 3px;
  border-bottom: none;
  border-top-color: #333;
}

/* Workspace */
.workspace {
  display: flex;
  flex: 1;
  min-height: 0;
}

.dock-bar {
  display: flex;
  justify-content: flex-end;
  flex: none;
  height: 13px;
  padding-right: 4px;
  background: #d2d4da;
  border-bottom: 1px solid #c0c1c6;
}

.close {
  color: #666;
  font-size: 14px;
  line-height: 12px;
}

.nav-panel {
  display: flex;
  flex-direction: column;
  flex: none;
  width: 183px;
  overflow: hidden;
  border-right: 1px solid #c3c3ca;
  margin-right: 4px;
}

.nav-title {
  flex: none;
  margin: 0;
  height: 21px;
  text-indent: -19px;
  font-size: 12px;
  font-weight: 400;
  color: #777;
  background: #eee;
  border-bottom: 1px solid #c3c3ca;
}

.nav-tools {
  display: flex;
  justify-content: flex-end;
  align-items: center;
  gap: 4px;
  flex: none;
  height: 28px;
  padding-right: 1px;
  background: #eee;
  border-bottom: 1px solid #c3c3ca;
}

.view-btn {
  display: flex;
  align-items: center;
  justify-content: center;
  width: 24px;
  height: 22px;
  background: #e6f1fd;
  border: 1px solid #4f9df0;
  border-radius: 3px;
}

.nav-tree {
  display: flex;
  flex-direction: column;
  margin-left: -4px;
  padding-top: 3px;
}

.nav-tree li {
  display: flex;
  align-items: center;
  flex: none;
  height: 24px;
  white-space: nowrap;
}

.nav-tree .sub {
  width: 140px;
  height: 21px;
  margin: 1px 0 2px 17px;
  padding: 1px 0 0 3px;
  gap: 5px;
}

.nav-tree .selected {
  background: #c8d9f0;
}

.vip {
  width: 30px;
  height: 10px;
  margin-left: 5px;
  background: #ffd75e;
  color: #b8860b;
  font: bold 9px/10px "Liberation Serif", serif;
  text-align: center;
}

.dock {
  display: flex;
  flex-direction: column;
  flex: none;
  gap: 4px;
  width: 281px;
}

.panel {
  display: flex;
  flex-direction: column;
  border: 1px solid #b8b9bd;
  border-top: none;
  overflow: hidden;
}

.component-panel {
  flex: 0 0 37%;
}

.property-panel {
  flex: 1;
  min-height: 0;
}

.panel-tabs {
  display: flex;
  flex: none;
  height: 22px;
  background: #eee;
  border-bottom: 1px solid #c3c3ca;
}

.panel-tab {
  padding: 1px 8px 0;
  color: #777;
  background: #e2e2e2;
  border-right: 1px solid #c3c3ca;
}

.panel-tab.active {
  color: #222;
  font-weight: 500;
  background: #eee;
}

.panel-tools {
  display: flex;
  gap: 9px;
  flex: none;
  height: 28px;
  padding: 3px 2px 0 5px;
  color: #222;
  background: #eee;
  border-bottom: 1px solid #c3c3ca;
}

.overflow-btn {
  margin-left: auto;
  height: 23px;
}

.search {
  display: flex;
  align-items: center;
  flex: none;
  height: 19px;
  padding: 1px 7px 0 2px;
  border-bottom: 1px solid #c3c3ca;
}

.search input {
  flex: 1;
  min-width: 0;
  height: 18px;
  outline: none;
}

.search input::placeholder {
  color: #777;
}

.component-tree {
  padding-top: 3px;
}

.component-tree li {
  height: 24px;
  padding-left: 40px;
}

.component-tree .root {
  display: flex;
  align-items: center;
  gap: 7px;
  padding-left: 10px;
}

.twist {
  border: 3px solid #333;
  border-top-color: transparent;
  border-left-color: transparent;
}

.item {
  display: inline-block;
  min-width: 39px;
  padding: 0 3px;
  margin-top: 2px;
}

.item.selected {
  background: #b1ccee;
}

/* Property table */
.props {
  width: 100%;
  table-layout: fixed;
  border-collapse: separate;
  border-spacing: 0;
}

.c-num {
  width: 22px;
}

.c-name {
  width: 101px;
}

.c-value {
  width: 114px;
}

.c-add {
  width: 42px;
}

.props th,
.props td {
  height: 21px;
  padding: 2px 0 0;
  line-height: 18px;
  border-right: 1px solid #d4d4d4;
  border-bottom: 1px solid #d4d4d4;
  white-space: nowrap;
  overflow: hidden;
}

.props th {
  font-weight: 400;
  text-align: center;
  color: #333;
  background: #eee;
  border-color: #c3c3c6;
}

.props td {
  padding-left: 3px;
}

.props th.hot {
  color: #fff;
  font-weight: 700;
  background: #80bbfb;
}

.props .blue {
  color: #1a5cff;
}

.props td:last-child {
  padding: 0 0 0 13px;
}

.props .editing {
  outline: 2px solid #7b7b7b;
  outline-offset: -1px;
}

.props input {
  appearance: none;
  display: block;
  width: 14px;
  height: 14px;
  margin: 0;
  background: #fff;
  border: 1px solid #808080;
  border-radius: 2px;
}

.fold td:nth-child(3) {
  background: #e9e9e9;
}

.expand {
  position: relative;
  width: 12px;
  height: 12px;
  margin-right: 6px;
  border: 1px solid #666;
  border-radius: 2px;
  vertical-align: -1px;
}

.expand::before,
.expand::after {
  content: '';
  position: absolute;
  background: #333;
}

.expand::before {
  left: 3px;
  top: 5px;
  width: 5px;
  height: 1px;
}

.expand::after {
  left: 5px;
  top: 3px;
  width: 1px;
  height: 5px;
}

.splitter {
  flex: none;
  width: 4px;
}

.splitter-grip {
  display: block;
  width: 4px;
  height: 100px;
  margin-top: 429px;
  background: #5c6770;
}

.splitter-grip::before {
  content: '';
  display: block;
  border: 3px solid transparent;
  border-left: none;
  border-right-color: #ccc;
}

/* 3D view */
.viewport {
  flex: 1;
  min-width: 0;
  background: #000;
  overflow: hidden;
}

.scene {
  display: block;
  width: 100%;
  height: 100%;
}

.axis {
  fill: none;
  stroke: #008000;
  stroke-width: 1.5;
}

.marks {
  fill: #fff;
  font-family: "Noto Sans CJK SC", sans-serif;
  font-size: 18px;
  text-anchor: middle;
}
```
